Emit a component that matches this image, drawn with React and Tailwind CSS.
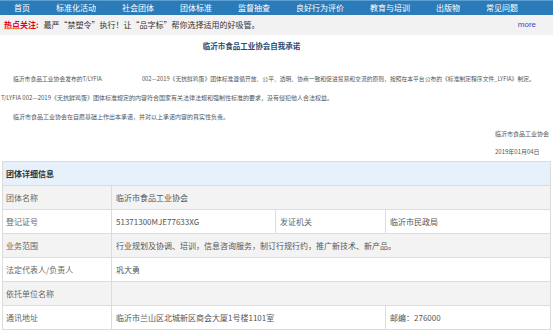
import React from 'react';

const navItems = ['首页', '标准化活动', '社会团体', '团体标准', '监督抽查', '良好行为评价', '教育与培训', '出版物', '常见问题'];

const cn = { fontFamily: '"Noto Sans CJK SC", "Liberation Sans", sans-serif' };

const Row = ({ label, bg, children }) => (
  <div className={`flex h-[24px] border-b border-[#dcdcdc] ${bg}`}>
    <div className="w-[109px] shrink-0 flex items-center pl-[3px] border-r border-[#dcdcdc] text-[#666]">{label}</div>
    {children}
  </div>
);

const Cell = ({ className = '', children }) => (
  <div className={`flex items-center pl-[4px] text-[#555] ${className}`}>{children}</div>
);

const App = () => {
  return (
    <div className="w-[553px] h-[332px] overflow-hidden bg-white" style={cn}>
      <div className="h-[15px] bg-[#2b7bb8] border-t border-[#5a9fd2] flex items-center pl-[1px]">
        {navItems.map(item => (
          <span key={item} className="px-[13px] text-[8px] leading-none text-white">{item}</span>
        ))}
      </div>

      <div className="h-[20px] bg-[#f2f2f2] flex items-center px-[4px] text-[8px] leading-none">
        <span className="text-[#e60012] font-bold">热点关注:</span>
        <span className="ml-[5px] text-[#333]">最严“禁塑令”执行！让“品字标”帮你选择适用的好吸管。</span>
        <span className="ml-auto mr-[13px] text-[#4a3fc9]" style={{ fontFamily: '"Liberation Sans", sans-serif' }}>more</span>
      </div>

      <div className="h-[22px] flex items-center justify-center pr-[50px] text-[7.5px] font-bold text-[#2d4b72]">
        临沂市食品工业协会自我承诺
      </div>

      <div className="text-[6px] leading-[14px] text-[#555]">
        <p className="mt-[15px] pl-[13px] whitespace-nowrap text-[5.8px]">
          临沂市食品工业协会发布的T/LYFIA<span className="inline-block w-[40px]"></span>002—2019《无抗鲜鸡蛋》团体标准遵循开放、公平、透明、协商一致和促进贸易和交流的原则，按照在本平台公布的《标准制定程序文件_LYFIA》制定。
        </p>
        <p className="mt-[5px] pl-[1px] whitespace-nowrap">
          T/LYFIA 002—2019《无抗鲜鸡蛋》团体标准规定的内容符合国家有关法律法规和强制性标准的要求，没有侵犯他人合法权益。
        </p>
        <p className="mt-[5px] pl-[13px] whitespace-nowrap">
          临沂市食品工业协会在自愿基础上作出本承诺，并对以上承诺内容的真实性负责。
        </p>
        <div className="flex justify-end pr-[4px]">
          <div className="text-left">
            <p className="mt-[3px]">临沂市食品工业协会</p>
            <p className="mt-[4px]">2019年01月04日</p>
          </div>
        </div>
      </div>

      <div className="mt-[2px] mx-[2px] border-t border-l border-r border-[#dcdcdc] text-[8px] leading-none">
        <div className="h-[24px] flex items-center pl-[3px] bg-[#e7f1fb] border-b border-[#dcdcdc] font-bold text-[#333]">
          团体详细信息
        </div>
        <Row label="团体名称" bg="bg-[#f3f3f3]">
          <Cell className="flex-1">临沂市食品工业协会</Cell>
        </Row>
        <Row label="登记证号" bg="bg-white">
          <Cell className="w-[164px] border-r border-[#dcdcdc]">51371300MJE77633XG</Cell>
          <Cell className="w-[110px] border-r border-[#dcdcdc] text-[#666]">发证机关</Cell>
          <Cell className="flex-1">临沂市民政局</Cell>
        </Row>
        <Row label="业务范围" bg="bg-[#f3f3f3]">
          <Cell className="flex-1">行业规划及协调、培训，信息咨询服务，制订行规行约，推广新技术、新产品。</Cell>
        </Row>
        <Row label="法定代表人/负责人" bg="bg-white">
          <Cell className="flex-1">巩大勇</Cell>
        </Row>
        <Row label="依托单位名称" bg="bg-[#f3f3f3]">
          <Cell className="flex-1"></Cell>
        </Row>
        <Row label="通讯地址" bg="bg-white">
          <Cell className="w-[274px] border-r border-[#dcdcdc]">临沂市兰山区北城新区商会大厦1号楼1101室</Cell>
          <Cell className="flex-1">邮编：276000</Cell>
        </Row>
      </div>
    </div>
  );
};

export default App;
